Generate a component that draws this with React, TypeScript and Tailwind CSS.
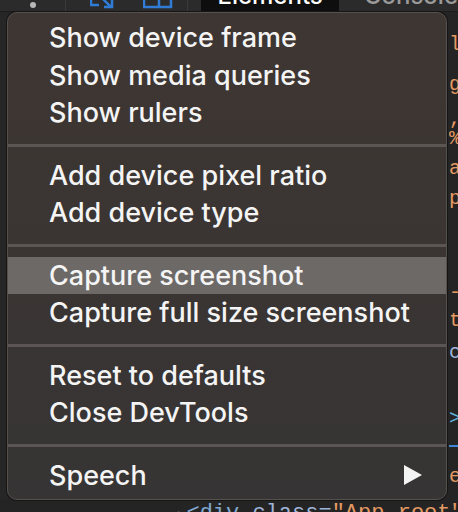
import { Fragment } from 'react';

type Item = { label: string; active?: boolean; submenu?: boolean };

const groups: Item[][] = [
  [{ label: 'Show device frame' }, { label: 'Show media queries' }, { label: 'Show rulers' }],
  [{ label: 'Add device pixel ratio' }, { label: 'Add device type' }],
  [{ label: 'Capture screenshot', active: true }, { label: 'Capture full size screenshot' }],
  [{ label: 'Reset to defaults' }, { label: 'Close DevTools' }],
  [{ label: 'Speech', submenu: true }],
];

// slivers of the Elements panel that peek out on the right
const codeLines = [
  { text: 'l', mt: 'mt-[23px]', color: 'text-[#e49a62]' },
  { text: 'g', mt: 'mt-[20px]', color: 'text-[#e49a62]' },
  { text: ',', mt: 'mt-[14px]', color: 'text-[#e49a62]' },
  { text: '%', mt: 'mt-[0px]', color: 'text-[#e49a62]' },
  { text: 'a', mt: 'mt-[10px]', color: 'text-[#e49a62]' },
  { text: 'p', mt: 'mt-[10px]', color: 'text-[#e49a62]' },
  { text: '-(', mt: 'mt-[74px]', color: 'text-[#e49a62]' },
  { text: 't', mt: 'mt-[8px]', color: 'text-[#e49a62]' },
  { text: 'c', mt: 'mt-[12px]', color: 'text-[#9fb4d8]' },
  { text: '>', mt: 'mt-[46px]', color: 'text-[#5fb3d9]' },
];

export default function App() {
  return (
    <div className="relative w-[458px] h-[512px] overflow-hidden bg-[#242424] font-['Inter','Liberation_Sans',sans-serif]">
      {/* devtools toolbar, cut off at the top */}
      <div className="flex h-[12px] items-end overflow-hidden bg-[#2b2b2b] border-b border-[#1c1c1c]">
        <div className="w-[70px] h-full flex justify-center border-r border-[#3a3a3a]">
          <div className="mt-[2px] w-[6px] h-[6px] rounded-full bg-[#b8b8b8]" />
        </div>
        <div className="flex h-full items-start gap-[25px] pl-[24px] w-[127px] border-r border-[#3a3a3a]">
          <svg width="28" height="10" viewBox="0 0 28 10" className="-mt-[1px]">
            <path d="M1 0v6h8M13 0l8 8M14 8h8V1" stroke="#2f7bd6" strokeWidth="2.5" fill="none" />
          </svg>
          <svg width="30" height="10" viewBox="0 0 30 10" className="-mt-[1px]">
            <path d="M1 0v8h27V0M16 0v8" stroke="#2f7bd6" strokeWidth="2.5" fill="none" />
          </svg>
        </div>
        <div className="ml-[13px] w-[145px] h-full bg-[#0e0e0e] flex justify-center">
          <span className="text-[24px] leading-none -mt-[16px] text-white font-medium">Elements</span>
        </div>
        <span className="ml-[25px] text-[24px] leading-none -mt-[16px] self-start text-[#9a9a9a] font-medium">Console</span>
      </div>

      {/* elements panel */}
      <div className="flex h-[488px]">
        <div className="w-[7px] bg-[#262626]" />
        <div className="flex-1" />
        <div className="w-[9px] flex flex-col font-['Liberation_Mono',monospace] text-[20px] leading-[20px] overflow-hidden">
          {codeLines.map((l, i) => (
            <span key={i} className={`${l.mt} ${l.color} whitespace-nowrap`}>{l.text}</span>
          ))}
          <div className="mt-[16px] h-[2px] bg-[#3f86d6]" />
          <span className="mt-[20px] text-[#e49a62]">e</span>
        </div>
      </div>

      <div className="absolute left-0 bottom-0 w-full h-[12px] overflow-hidden">
        <div className="pl-[178px] mt-[3px] font-['Liberation_Mono',monospace] text-[22px] leading-[22px] whitespace-nowrap">
          <span className="text-[#8a8a8a] text-[14px]">▶</span>
          <span className="text-[#80a8cf]">&lt;div</span>{' '}
          <span className="text-[#9fb4d8]">class=</span>
          <span className="text-[#e49a62]">"App-root"</span>
        </div>
      </div>

      {/* context menu */}
      <div className="absolute left-[7px] top-[12px] w-[440px] h-[488px] rounded-[10px] border border-[#57514e] bg-gradient-to-b from-[#3e3632] to-[#363434] shadow-[0_0_0_1px_#151515] pt-[6px] overflow-hidden">
        {groups.map((g, gi) => (
          <Fragment key={gi}>
            {gi > 0 && <div className="mt-[12px] mb-[10px] h-[3px] bg-[#5b5653]" />}
            {g.map((it) => (
              <div
                key={it.label}
                className={`flex h-[37.5px] items-center justify-between pl-[41px] pr-[24px] text-[27px] font-medium text-[#f4f4f4] ${
                  it.active ? 'bg-[#6d6967]' : ''
                }`}
              >
                <span className="leading-none">{it.label}</span>
                {it.submenu && (
                  <svg width="18" height="20" viewBox="0 0 18 20">
                    <polygon points="0,0 18,10 0,20" fill="#f4f4f4" />
                  </svg>
                )}
              </div>
            ))}
          </Fragment>
        ))}
      </div>
    </div>
  );
}
